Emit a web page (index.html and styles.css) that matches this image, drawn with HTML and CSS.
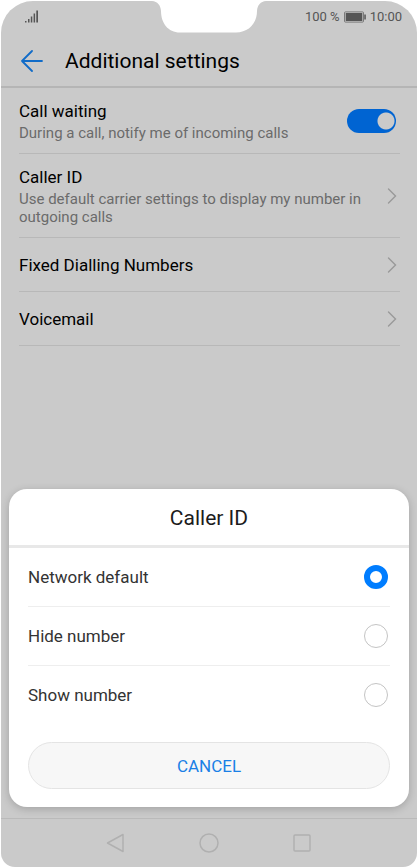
FILE: index.html
```html
<!DOCTYPE html>
<html lang="en">
<head>
<meta charset="utf-8">
<meta name="viewport" content="width=device-width, initial-scale=1">
<title>Additional settings</title>
<link rel="stylesheet" href="styles.css">
</head>
<body>
<div class="phone">
  <svg class="notch" width="114" height="33" viewBox="0 0 114 33" aria-hidden="true"><path fill="#fff" d="M0 0V1C5.500 1.500 8.500 5 9 11C9 23 16 32.500 28 32.500H84C97 32.500 105 23 105 11C105.500 5 108.500 1.500 114 1V0Z"/></svg>
  <div class="status">
    <svg width="14" height="13" viewBox="0 0 14 13" aria-label="Signal" role="img"><path fill="#555" d="M0 11h1.500v1.500H0zM3 9h1.500v3.500H3zM5.800 6.500h1.500v6H5.800zM8.600 3.500h1.500v9H8.600zM11.300 0.500h1.700v12h-1.700z"/></svg>
    <div class="status-right">
      <span>100 %</span>
      <svg width="22" height="12" viewBox="0 0 22 12" aria-hidden="true"><rect x=".5" y=".9" width="19" height="10.200" rx="1" fill="none" stroke="#666" stroke-width=".8"/><rect x="1.700" y="2" width="16.600" height="8" fill="#555"/><path fill="#555" d="M20.300 3.500h1.500v5h-1.500z"/></svg>
      <span>10:00</span>
    </div>
  </div>
  <header class="header">
    <button class="back" type="button" aria-label="Back"><svg width="22" height="22" viewBox="0 0 22 22"><path fill="none" stroke="#116cc8" stroke-width="1.800" stroke-linecap="round" stroke-linejoin="round" d="M11 1L1 11L11 21M1 11H21"/></svg></button>
    <h1>Additional settings</h1>
  </header>
  <main class="list">
    <label class="row">
      <span class="text"><span class="name">Call waiting</span><span class="note">During a call, notify me of incoming calls</span></span>
      <input class="switch" type="checkbox" role="switch" checked>
    </label>
    <a class="row" href="#caller-id">
      <span class="text"><span class="name">Caller ID</span><span class="note">Use default carrier settings to display my number in outgoing calls</span></span>
      <svg class="chevron" width="10" height="16" viewBox="0 0 10 16"><path d="M1.500 1L8.500 8L1.500 15"/></svg>
    </a>
    <a class="row" href="#fixed">
      <span class="text"><span class="name">Fixed Dialling Numbers</span></span>
      <svg class="chevron" width="10" height="16" viewBox="0 0 10 16"><path d="M1.500 1L8.500 8L1.500 15"/></svg>
    </a>
    <a class="row" href="#voicemail">
      <span class="text"><span class="name">Voicemail</span></span>
      <svg class="chevron" width="10" height="16" viewBox="0 0 10 16"><path d="M1.500 1L8.500 8L1.500 15"/></svg>
    </a>
  </main>
  <form class="dialog" role="dialog" aria-labelledby="dialog-title">
    <h2 id="dialog-title">Caller ID</h2>
    <div class="options">
      <label class="option"><span>Network default</span><input type="radio" name="caller" checked></label>
      <label class="option"><span>Hide number</span><input type="radio" name="caller"></label>
      <label class="option"><span>Show number</span><input type="radio" name="caller"></label>
      <button class="cancel" type="button">CANCEL</button>
    </div>
  </form>
  <nav class="nav">
    <button type="button" aria-label="Back"><svg width="20" height="20" viewBox="0 0 20 20"><path d="M17 1.500V18.500L1.500 10Z"/></svg></button>
    <button type="button" aria-label="Home"><svg width="20" height="20" viewBox="0 0 20 20"><circle cx="10" cy="10" r="9"/></svg></button>
    <button type="button" aria-label="Recent"><svg width="20" height="20" viewBox="0 0 20 20"><rect x="2" y="2" width="16" height="16" rx="1"/></svg></button>
  </nav>
</div>
</body>
</html>
```
FILE: styles.css
```css
* { box-sizing: border-box; }
body { margin: 0; background: #fff; font-family: Roboto, sans-serif; color: #000; }
button { border: 0; padding: 0; background: none; font: inherit; }
svg { display: block; flex: none; }
.phone {
  position: relative;
  display: flex;
  flex-direction: column;
  min-height: calc(100vh - 2px);
  margin: 1px;
  background: #cacaca;
  border-radius: 32px 32px 14px 14px;
  overflow: hidden;
}
.notch { position: absolute; top: -1px; left: 50%; transform: translateX(-50%); }
.status {
  display: flex;
  justify-content: space-between;
  align-items: center;
  height: 31px;
  padding: 0 15px 0 24px;
  font-size: 13px;
  color: #555;
}
.status-right { display: flex; align-items: center; gap: 4px; }
.header {
  display: flex;
  align-items: center;
  gap: 22px;
  height: 56px;
  padding: 4px 20px 0;
  border-bottom: 2px solid #b5b5b5;
}
h1 { margin: 0; font-size: 21px; line-height: 24px; font-weight: 400; }
.list { flex: 1; padding: 0 17px 0 18px; }
.row {
  display: flex;
  align-items: center;
  justify-content: space-between;
  gap: 12px;
  min-height: 54px;
  padding: 12px 3px 11px 0;
  border-bottom: 1px solid #b8b8b8;
  color: inherit;
  text-decoration: none;
}
.row:first-child { padding-right: 4px; }
.text { display: flex; flex-direction: column; gap: 2px; }
.name { font-size: 17px; line-height: 22px; }
.note { font-size: 15px; line-height: 18px; color: #6b6b6b; }
.chevron path { fill: none; stroke: #999; stroke-width: 1.400; stroke-linecap: round; }
.switch {
  appearance: none;
  flex: none;
  width: 49px;
  height: 24px;
  margin: 0;
  border-radius: 12px;
  background: radial-gradient(circle at 39px 12px, #cacaca 8px, #0064d2 9px);
}
.dialog {
  position: absolute;
  left: 8px;
  right: 8px;
  bottom: 60px;
  background: #fff;
  border-radius: 18px;
  box-shadow: 0 2px 8px rgba(0, 0, 0, .2);
}
h2 {
  margin: 0;
  padding: 17px 0 15px;
  border-bottom: 3px solid #e8e8e8;
  font-size: 21px;
  line-height: 24px;
  font-weight: 400;
  text-align: center;
  color: #1c1c1c;
}
.options { padding: 0 19px 18px; }
.option {
  display: flex;
  align-items: center;
  justify-content: space-between;
  height: 59px;
  padding-right: 2px;
  border-bottom: 1px solid #eee;
  font-size: 17px;
  color: #333;
}
.option:nth-child(3) { border-bottom-color: transparent; }
.option input {
  appearance: none;
  width: 24px;
  height: 24px;
  margin: 0;
  border: 1px solid #c4c4c4;
  border-radius: 50%;
}
.option input:checked { border: 6px solid #007dff; }
.cancel {
  display: block;
  width: 100%;
  height: 47px;
  margin-top: 17px;
  border: 1px solid #e4e4e4;
  border-radius: 24px;
  background: #f7f7f7;
  font-size: 17px;
  color: #1a80e6;
}
.nav {
  display: flex;
  justify-content: center;
  align-items: center;
  gap: 73px;
  height: 49px;
  border-top: 1px solid #bababa;
}
.nav svg { fill: none; stroke: #b0b0b0; stroke-width: 1.500; stroke-linejoin: round; }
```
